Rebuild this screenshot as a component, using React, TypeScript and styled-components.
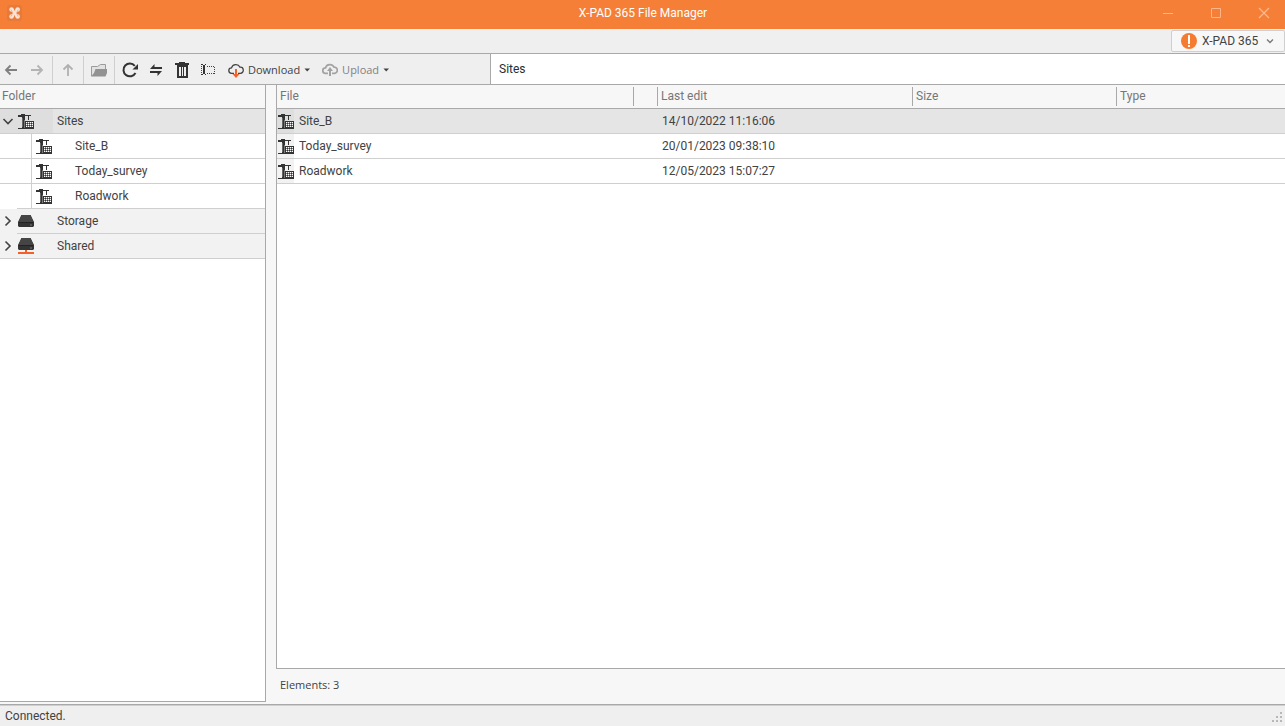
import React from 'react';
import styled, { createGlobalStyle, css } from 'styled-components';

const GlobalStyle = createGlobalStyle`
  * { box-sizing: border-box; }
  body { margin: 0; background: #f7f7f7; }
  button, input, table { font: inherit; color: inherit; }
  svg { display: block; flex: none; }
`;

const Window = styled.div`
  display: flex;
  flex-direction: column;
  min-height: 100vh;
  font-family: Roboto, "Liberation Sans", sans-serif;
  font-size: 12px;
  line-height: 16px;
  color: #424242;
`;

const TitleBar = styled.header`
  display: grid;
  grid-template-columns: 1fr auto 1fr;
  align-items: center;
  height: 29px;
  padding: 0 5px 3px 6px;
  background: #f57f36;
  color: #fff;
`;

const Title = styled.h1`
  margin: 0;
  font-size: 12px;
  font-weight: 400;
`;

const WindowControls = styled.div`
  display: flex;
  justify-content: flex-end;
  gap: 16px;
`;

const PlainButton = styled.button`
  display: flex;
  align-items: center;
  justify-content: center;
  padding: 0;
  border: 0;
  background: none;
`;

const WindowButton = styled(PlainButton)`
  width: 32px;
  height: 26px;
  color: #fbb68b;
`;

const Ribbon = styled.div`
  display: flex;
  justify-content: flex-end;
  height: 25px;
  padding-top: 1px;
  border-bottom: 1px solid #a9a9a9;
  background: #efefef;
`;

const AccountButton = styled.button`
  display: flex;
  align-items: center;
  width: 114px;
  height: 22px;
  padding: 0 10px 0 9px;
  border: 1px solid #cfcfcf;
  border-radius: 2px;
  background: #f7f7f7;
  white-space: nowrap;
`;

const AccountName = styled.span`
  flex: 1;
  margin-left: 5px;
  text-align: left;
`;

const CommandBar = styled.div`
  display: flex;
  height: 31px;
  border-bottom: 1px solid #a9a9a9;
  background: #efefef;
`;

const Tools = styled.div`
  display: flex;
  flex: none;
  width: 490px;
  padding-top: 2px;
`;

const ToolGroup = styled.div<{ $first?: boolean; $last?: boolean }>`
  display: flex;
  gap: 10px;
  padding: 0 7px 0 ${p => (p.$first ? 3 : 7)}px;
  border-right: ${p => (p.$last ? 0 : 1)}px solid #cfcfcf;
`;

const ToolButton = styled(PlainButton)`
  width: 16px;
`;

const MenuButton = styled(PlainButton)<{ $muted?: boolean }>`
  gap: 4px;
  margin-left: 2px;
  font-family: "Open Sans", "Noto Sans", sans-serif;
  font-size: 11px;
  color: ${p => (p.$muted ? '#828282' : '#424242')};
`;

const PathInput = styled.input`
  flex: 1;
  min-width: 0;
  padding: 0 8px;
  border: 0;
  border-left: 1px solid #a9a9a9;
  border-radius: 0;
  outline: none;
  background: #fff;
  color: #2b2b2b;
`;

const Workspace = styled.main`
  display: flex;
  flex: 1;
  gap: 10px;
`;

const FolderPane = styled.nav`
  flex: none;
  width: 266px;
  margin-bottom: 2px;
  border: solid #a9a9a9;
  border-width: 0 1px 1px 0;
  background: #fff;
`;

const FolderHeading = styled.h2`
  height: 24px;
  margin: 0;
  padding: 3px 2px;
  border-bottom: 1px solid #a9a9a9;
  background: #f7f7f7;
  color: #767676;
  font-size: 12px;
  font-weight: 400;
`;

const List = styled.ul`
  margin: 0;
  padding: 0;
  list-style: none;
`;

const RootRow = styled.div<{ $open?: boolean }>`
  display: flex;
  height: 25px;
  background: ${p => (p.$open ? '#e5e5e5' : '#f2f2f2')};
`;

const Expander = styled(PlainButton)<{ $line?: boolean }>`
  width: 17px;
  padding-right: 1px;
  color: #424242;
  border-bottom: 1px solid ${p => (p.$line ? '#cfcfcf' : 'transparent')};
`;

const RootLabel = styled.div`
  display: flex;
  flex: 1;
  align-items: center;
  border-bottom: 1px solid #cfcfcf;
  padding-left: 1px;
  gap: 23px;
`;

const OpenShade = styled.div`
  display: flex;
  flex: none;
  width: 53px;
  background: #dedede;
`;

const IconSlot = styled.div`
  display: flex;
  align-items: center;
  flex: 1;
  padding-left: 1px;
  border-bottom: 1px solid #cfcfcf;
`;

const OpenName = styled.span`
  flex: 1;
  padding: 4px;
  border-bottom: 1px solid #cfcfcf;
`;

const ChildRow = styled.li`
  display: flex;
  height: 25px;
`;

const Indent = styled.div<{ $line: boolean }>`
  display: flex;
  justify-content: flex-end;
  width: 32px;
  border-right: 1px solid #cfcfcf;
  &::after {
    content: "";
    align-self: flex-end;
    width: ${p => (p.$line ? 31 : 14)}px;
    height: 1px;
    background: #cfcfcf;
  }
`;

const ChildLabel = styled.div`
  display: flex;
  flex: 1;
  align-items: center;
  gap: 23px;
  padding-left: 4px;
  border-bottom: 1px solid #cfcfcf;
`;

const FilePane = styled.section`
  display: flex;
  flex: 1;
  flex-direction: column;
  min-width: 0;
`;

const FileArea = styled.div`
  flex: 1;
  border: solid #a9a9a9;
  border-width: 0 0 1px 1px;
  background: #fff;
`;

const Table = styled.table`
  width: 100%;
  table-layout: fixed;
  border-collapse: separate;
  border-spacing: 0;
`;

const Col = styled.col<{ $w?: number }>`
  ${p => p.$w && css`width: ${p.$w}px;`}
`;

const HeadCell = styled.th`
  height: 24px;
  padding: 2px 0;
  border-bottom: 1px solid #a9a9a9;
  background: #f7f7f7;
  color: #767676;
  font-weight: 400;
  text-align: left;
`;

const HeadLabel = styled.div<{ $last?: boolean }>`
  height: 19px;
  padding: 1px 3px;
  border-right: ${p => (p.$last ? 0 : 1)}px solid #a9a9a9;
`;

const FileRow = styled.tr<{ $selected?: boolean }>`
  background: ${p => (p.$selected ? '#e5e5e5' : '#fff')};
`;

const Cell = styled.td`
  height: 25px;
  padding: 0 4px;
  border-bottom: 1px solid #cfcfcf;
`;

const NameCell = styled(Cell)`
  padding: 0;
`;

const FileName = styled.div`
  display: flex;
  align-items: center;
  gap: 5px;
`;

const FileIcon = styled.span<{ $selected?: boolean }>`
  display: flex;
  align-items: center;
  width: 17px;
  height: 24px;
  padding-left: 1px;
  background: ${p => (p.$selected ? '#dedede' : '#f2f2f2')};
`;

const Summary = styled.p`
  height: 35px;
  margin: 0;
  padding: 8px 4px;
  font-family: "Open Sans", "Noto Sans", sans-serif;
  font-size: 11px;
`;

const StatusBar = styled.footer`
  display: flex;
  justify-content: space-between;
  height: 22px;
  padding: 3px 2px 0 5px;
  border-top: 1px solid #a9a9a9;
  background: #efefef;
  box-shadow: inset 0 1px #cfcfcf;
`;

const Grip = styled.svg`
  margin-top: 4px;
`;

const Logo = () => (
  <svg width="18" height="18" viewBox="0 0 18 18" aria-hidden="true">
    <rect x="1" y="1" width="15" height="16" rx="3" fill="#e77939" />
    <g fill="#fbe3d5">
      <circle cx="5.500" cy="5.500" r="2.200" />
      <circle cx="11.700" cy="5.500" r="2.200" />
      <circle cx="5.500" cy="12.500" r="2.200" />
      <circle cx="11.700" cy="12.500" r="2.200" />
      <path d="M7.500 4.500L8.600 7l1.200-2.500L12 7l-1.500 2 1.500 2-2.200 2.500L8.600 11l-1.100 2.500L5.200 11l1.500-2-1.500-2z" />
    </g>
    <path d="M5 5.500l1.700 3.500L5 12.500M12.200 5.500L10.500 9l1.700 3.500" fill="none" stroke="#f3a77c" strokeWidth=".8" />
  </svg>
);

const Crane = () => (
  <svg width="16" height="16" viewBox="0 0 16 16" aria-hidden="true" shapeRendering="crispEdges">
    <path d="M3 1h4v1h6v1H7v12H4V4H0V2h3zM10 3h1v4h-1zM0 15h16v1H0zM7 8h9v8H7z" fill="#333" />
    <path d="M4 5h1v9H4z" fill="#666" />
    <path d="M6 7h1v8H6z" fill="#777" />
    <path
      d="M8 9h1v1H8zm2 0h1v1h-1zm2 0h1v1h-1zm2 0h1v1h-1zM8 11h1v1H8zm2 0h1v1h-1zm2 0h1v1h-1zm2 0h1v1h-1zM8 13h1v1H8zm2 0h1v1h-1zm2 0h1v1h-1zm2 0h1v1h-1z"
      fill="#fff"
    />
    <path
      d="M9 9h1v1H9zm2 0h1v1h-1zm2 0h1v1h-1zM9 11h1v1H9zm2 0h1v1h-1zm2 0h1v1h-1zM9 13h1v1H9zm2 0h1v1h-1zm2 0h1v1h-1zM8 10h1v1H8zm2 0h1v1h-1zm2 0h1v1h-1zm2 0h1v1h-1zM8 12h1v1H8zm2 0h1v1h-1zm2 0h1v1h-1zm2 0h1v1h-1z"
      fill="#808080"
    />
  </svg>
);

const Drive = ({ shared }: { shared?: boolean }) => (
  <svg width="16" height="16" viewBox="0 0 16 16" aria-hidden="true">
    <g transform={shared ? 'translate(0 -2)' : undefined}>
      <path d="M3.500 2h9L16 9v4l-1 1H1l-1-1V9z" fill="#333" />
      <path d="M3.500 2h9l3 7H.5z" fill="#454545" />
      <path d="M1 9.500h14" stroke="#222" />
      <path d="M12 12h2" stroke="#777" />
    </g>
    {shared && (
      <path d="M0 14h16v2H0zM7 12h2v4H7z" fill="#f4602a" shapeRendering="crispEdges" />
    )}
  </svg>
);

const Arrow = ({ turn, color }: { turn: number; color: string }) => (
  <svg width="16" height="16" viewBox="0 0 16 16" aria-hidden="true">
    <path
      d="M14 8H3M7.500 3.500L3 8l4.500 4.500"
      transform={`rotate(${turn} 8 8)`}
      fill="none"
      stroke={color}
      strokeWidth="1.800"
    />
  </svg>
);

const OpenFolder = () => (
  <svg width="16" height="16" viewBox="0 0 16 16" aria-hidden="true">
    <path d="M.5 14V4.500h6l3-2h5V7" fill="#e2e2e2" stroke="#9b9b9b" />
    <path d="M4.500 7H16v4l-1.500 3.500H0L3 11z" fill="#929292" />
  </svg>
);

const Refresh = () => (
  <svg width="16" height="16" viewBox="0 0 16 16" aria-hidden="true">
    <path d="M13.500 11A6.400 6.400 0 1 1 12.800 3.800" fill="none" stroke="#333" strokeWidth="2" />
    <path d="M16 2v5.500h-5.500z" fill="#333" />
  </svg>
);

const Swap = () => (
  <svg width="16" height="16" viewBox="0 0 16 16" aria-hidden="true">
    <path d="M2 7h12V5H6.500V2zM14 9H2v2h7.500v3z" fill="#333" />
  </svg>
);

const Trash = () => (
  <svg width="16" height="16" viewBox="0 0 16 16" aria-hidden="true">
    <path
      d="M5 0h6v1h4v2h-1v13H3V3H1V1h4zM5 5v9h2V5zm3 0v9h1V5zm2 0v9h2V5z"
      fill="#333"
      fillRule="evenodd"
      shapeRendering="crispEdges"
    />
  </svg>
);

const Rename = () => (
  <svg width="16" height="16" viewBox="0 0 16 16" aria-hidden="true" shapeRendering="crispEdges">
    <path d="M1 2h2v1H1zM5 2h1v1H5zM3 3h2v9H3zM1 12h2v1H1zM5 12h1v1H5z" fill="#333" />
    <path d="M7 4.500h8M7 11.500h8M14.500 5v7M1.500 4v8" fill="none" stroke="#444" strokeDasharray="1 1" />
  </svg>
);

const Cloud = ({ up }: { up?: boolean }) => (
  <svg width="16" height="16" viewBox="0 0 16 16" aria-hidden="true">
    <path
      d="M6 11.300H3.500a2.700 2.700 0 0 1 0-5.400A4.600 4.600 0 0 1 12 5.200a3 3 0 0 1 .500 6.100H10"
      fill="none"
      stroke={up ? '#a3a3a3' : '#444'}
      strokeWidth={up ? 1.7 : 1.3}
    />
    {up ? (
      <path d="M7 14V9H5l3-4 3 4H9v5z" fill="#a3a3a3" />
    ) : (
      <path d="M7 7h2v5h2.500L8 16l-3.500-4H7z" fill="#f4622b" />
    )}
  </svg>
);

const Caret = () => (
  <svg width="6" height="4" viewBox="0 0 6 4" aria-hidden="true">
    <path d="M.5 .5h5.500L3.200 3.500z" fill="#444" />
  </svg>
);

const Chevron = ({ right }: { right?: boolean }) => (
  <svg width="12" height="12" viewBox="0 0 12 12" aria-hidden="true">
    <path d={right ? 'M3.500 1.500L8 6l-4.500 4.500' : 'M1.500 4L6 8.500 10.500 4'} fill="none" stroke="currentColor" strokeWidth="1.600" />
  </svg>
);

const Alert = () => (
  <svg width="16" height="16" viewBox="0 0 16 16" aria-hidden="true">
    <circle cx="8" cy="8" r="8" fill="#f57b30" />
    <path d="M7 2h2v9H7zM7 12h2v2H7z" fill="#fff" />
  </svg>
);

const files = [
  { name: 'Site_B', edited: '14/10/2022 11:16:06' },
  { name: 'Today_survey', edited: '20/01/2023 09:38:10' },
  { name: 'Roadwork', edited: '12/05/2023 15:07:27' },
];

const columns = ['File', '', 'Last edit', 'Size', 'Type'];

export default function App() {
  return (
    <Window>
      <GlobalStyle />
      <TitleBar>
        <Logo />
        <Title>X-PAD 365 File Manager</Title>
        <WindowControls>
          <WindowButton aria-label="Minimize">
            <svg width="12" height="12"><path d="M1 6.500h10" stroke="currentColor" /></svg>
          </WindowButton>
          <WindowButton aria-label="Maximize">
            <svg width="12" height="12"><path d="M1.500 1.500h9v9h-9z" fill="none" stroke="currentColor" /></svg>
          </WindowButton>
          <WindowButton aria-label="Close">
            <svg width="12" height="12"><path d="M1 1l10 10M11 1L1 11" stroke="currentColor" strokeWidth="1.400" /></svg>
          </WindowButton>
        </WindowControls>
      </TitleBar>
      <Ribbon>
        <AccountButton>
          <Alert />
          <AccountName>X-PAD 365</AccountName>
          <svg width="8" height="6" viewBox="0 0 8 6" aria-hidden="true">
            <path d="M1 1.500l3 3 3-3" fill="none" stroke="#777" strokeWidth="1.300" />
          </svg>
        </AccountButton>
      </Ribbon>
      <CommandBar>
        <Tools role="toolbar" aria-label="File commands">
          <ToolGroup $first>
            <ToolButton aria-label="Back"><Arrow turn={0} color="#808080" /></ToolButton>
            <ToolButton aria-label="Forward"><Arrow turn={180} color="#b4b4b4" /></ToolButton>
          </ToolGroup>
          <ToolGroup>
            <ToolButton aria-label="Up"><Arrow turn={90} color="#b0b0b0" /></ToolButton>
          </ToolGroup>
          <ToolGroup>
            <ToolButton aria-label="Open folder"><OpenFolder /></ToolButton>
          </ToolGroup>
          <ToolGroup $last>
            <ToolButton aria-label="Refresh"><Refresh /></ToolButton>
            <ToolButton aria-label="Transfer"><Swap /></ToolButton>
            <ToolButton aria-label="Delete"><Trash /></ToolButton>
            <ToolButton aria-label="Rename"><Rename /></ToolButton>
            <MenuButton><Cloud />Download<Caret /></MenuButton>
            <MenuButton $muted><Cloud up />Upload<Caret /></MenuButton>
          </ToolGroup>
        </Tools>
        <PathInput aria-label="Path" defaultValue="Sites" />
      </CommandBar>
      <Workspace>
        <FolderPane>
          <FolderHeading>Folder</FolderHeading>
          <List>
            <li>
              <RootRow $open>
                <OpenShade>
                  <Expander $line aria-label="Collapse Sites"><Chevron /></Expander>
                  <IconSlot><Crane /></IconSlot>
                </OpenShade>
                <OpenName>Sites</OpenName>
              </RootRow>
              <List>
                {files.map((f, i) => (
                  <ChildRow key={f.name}>
                    <Indent $line={i < files.length - 1} />
                    <ChildLabel><Crane />{f.name}</ChildLabel>
                  </ChildRow>
                ))}
              </List>
            </li>
            <li>
              <RootRow>
                <Expander aria-label="Expand Storage"><Chevron right /></Expander>
                <RootLabel><Drive />Storage</RootLabel>
              </RootRow>
            </li>
            <li>
              <RootRow>
                <Expander $line aria-label="Expand Shared"><Chevron right /></Expander>
                <RootLabel><Drive shared />Shared</RootLabel>
              </RootRow>
            </li>
          </List>
        </FolderPane>
        <FilePane>
          <FileArea>
            <Table>
              <colgroup>
                <Col $w={357} /><Col $w={24} /><Col $w={255} /><Col $w={204} /><Col />
              </colgroup>
              <thead>
                <tr>
                  {columns.map((c, i) => (
                    <HeadCell key={i} scope="col">
                      <HeadLabel $last={i === columns.length - 1}>{c}</HeadLabel>
                    </HeadCell>
                  ))}
                </tr>
              </thead>
              <tbody>
                {files.map((f, i) => (
                  <FileRow key={f.name} $selected={i === 0}>
                    <NameCell>
                      <FileName><FileIcon $selected={i === 0}><Crane /></FileIcon>{f.name}</FileName>
                    </NameCell>
                    <Cell />
                    <Cell>{f.edited}</Cell>
                    <Cell />
                    <Cell />
                  </FileRow>
                ))}
              </tbody>
            </Table>
          </FileArea>
          <Summary>Elements: 3</Summary>
        </FilePane>
      </Workspace>
      <StatusBar>
        <span>Connected.</span>
        <Grip width="12" height="11" aria-hidden="true" shapeRendering="crispEdges">
          <path d="M9 0h2v2H9zM5 4h2v2H5zM9 4h2v2H9zM1 8h2v2H1zM5 8h2v2H5zM9 8h2v2H9z" fill="#b8b8b8" />
        </Grip>
      </StatusBar>
    </Window>
  );
}
